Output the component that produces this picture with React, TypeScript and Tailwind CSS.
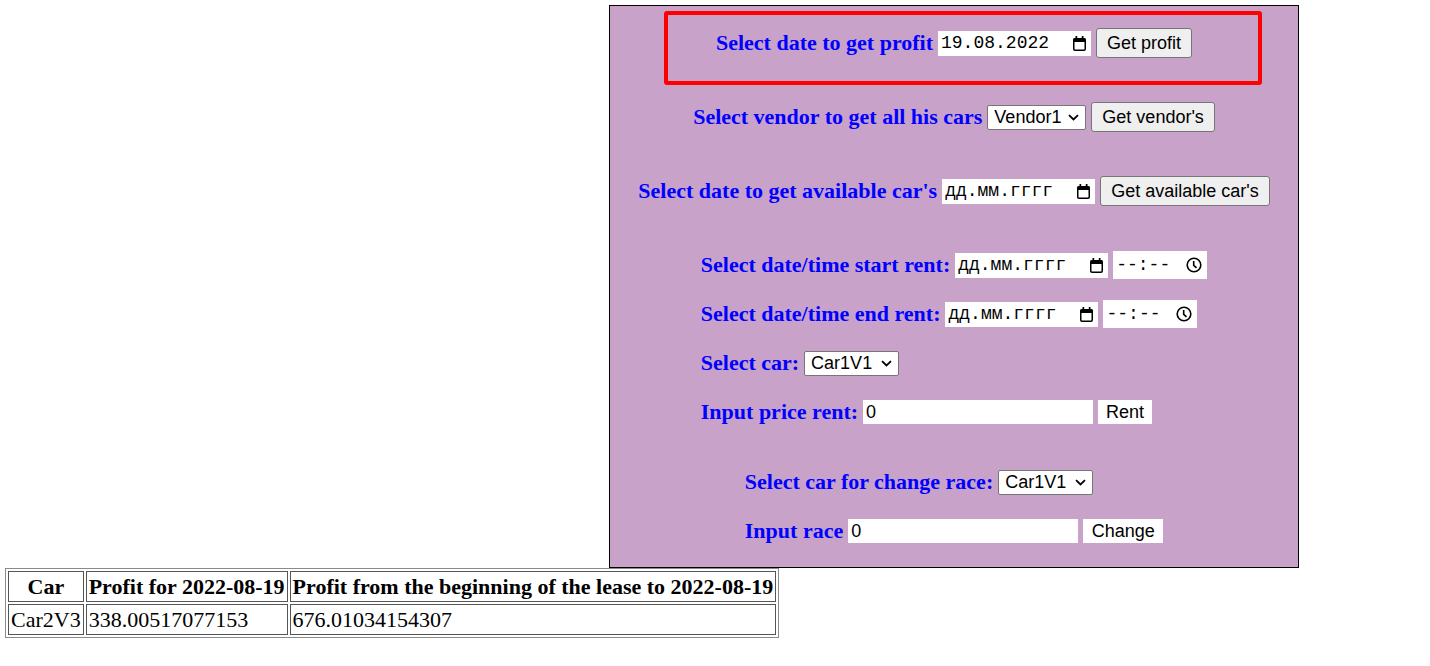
import React from 'react';

const labelCls = "text-[22px] font-bold text-[#0000ff] whitespace-nowrap leading-none";
const labelFont = { fontFamily: '"Liberation Serif", "Times New Roman", serif' };
const ctrlFont = { fontFamily: '"Liberation Sans", Arial, sans-serif' };
const monoFont = { fontFamily: '"Liberation Mono", "DejaVu Sans Mono", monospace' };

function CalendarIcon() {
  return (
    <svg width="15" height="17" viewBox="0 0 15 17">
      <rect x="1.75" y="3.75" width="11.5" height="11.5" rx="1.2" fill="none" stroke="#000" strokeWidth="1.5" />
      <rect x="1.5" y="3.5" width="12" height="3.5" fill="#000" />
      <rect x="3.5" y="1" width="1.7" height="3.5" fill="#000" />
      <rect x="9.8" y="1" width="1.7" height="3.5" fill="#000" />
    </svg>
  );
}

function ClockIcon() {
  return (
    <svg width="16" height="16" viewBox="0 0 16 16">
      <circle cx="8" cy="8" r="6.8" fill="none" stroke="#000" strokeWidth="1.6" />
      <path d="M7.7 4v4.3l2.8 2.6" fill="none" stroke="#000" strokeWidth="1.6" />
    </svg>
  );
}

function Chevron() {
  return (
    <svg width="11" height="7" viewBox="0 0 11 7">
      <path d="M1 1.2l4.5 4.3 4.5-4.3" fill="none" stroke="#000" strokeWidth="1.8" />
    </svg>
  );
}

function DateField({ value }: { value?: string }) {
  return (
    <div className="flex items-center justify-between w-[153px] h-[25px] bg-white pl-[3px] pr-[4px]">
      <span className="text-[18px] text-black leading-none" style={monoFont}>{value ?? 'дд.мм.гггг'}</span>
      <CalendarIcon />
    </div>
  );
}

function TimeField() {
  return (
    <div className="flex items-center justify-between w-[94px] h-[28px] bg-white pl-[3px] pr-[5px]">
      <span className="text-[18px] text-black leading-none" style={monoFont}>--:--</span>
      <ClockIcon />
    </div>
  );
}

function SelectField({ value, width }: { value: string; width: string }) {
  return (
    <div
      className={`flex items-center justify-between ${width} h-[25px] bg-white border border-[#767676] rounded-[2px] pl-[6px] pr-[6px]`}
    >
      <span className="text-[18px] text-black leading-none" style={ctrlFont}>{value}</span>
      <Chevron />
    </div>
  );
}

function GrayButton({ children }: { children: React.ReactNode }) {
  return (
    <button
      className="h-[30px] px-[10px] bg-[#efefef] border border-[#767676] rounded-[3px] text-[18px] text-black leading-none"
      style={ctrlFont}
    >
      {children}
    </button>
  );
}

function TextField({ value }: { value: string }) {
  return (
    <div className="flex items-center w-[230px] h-[24px] bg-white pl-[3px]">
      <span className="text-[18px] text-black leading-none" style={ctrlFont}>{value}</span>
    </div>
  );
}

function WhiteButton({ children, width }: { children: React.ReactNode; width: string }) {
  return (
    <button
      className={`${width} h-[24px] bg-white text-[18px] text-black leading-none`}
      style={ctrlFont}
    >
      {children}
    </button>
  );
}

function Row({ label, children }: { label: string; children: React.ReactNode }) {
  return (
    <div className="flex items-center h-[30px] gap-[5px]">
      <span className={labelCls} style={labelFont}>{label}</span>
      {children}
    </div>
  );
}

export default function App() {
  const cell = "border border-[#555] px-[2px] py-[2px] leading-[25px]";
  return (
    <div className="min-h-screen bg-white">
      <div className="relative ml-[609px] mt-[5px] w-[690px] h-[563px] border border-black bg-[#c8a2c8] pt-[22px] flex flex-col items-center">
        {/* red highlight frame */}
        <div className="absolute left-[54px] top-[5px] w-[598px] h-[74px] border-4 border-[#ff0000] rounded-[3px]" />

        <Row label="Select date to get profit">
          <DateField value="19.08.2022" />
          <GrayButton>Get profit</GrayButton>
        </Row>

        <div className="mt-[44px]">
          <Row label="Select vendor to get all his cars">
            <SelectField value="Vendor1" width="w-[99px]" />
            <GrayButton>Get vendor's</GrayButton>
          </Row>
        </div>

        <div className="mt-[44px]">
          <Row label="Select date to get available car's">
            <DateField />
            <GrayButton>Get available car's</GrayButton>
          </Row>
        </div>

        <div className="mt-[44px] flex flex-col items-start gap-[19px]">
          <Row label="Select date/time start rent:">
            <DateField />
            <TimeField />
          </Row>
          <Row label="Select date/time end rent:">
            <DateField />
            <TimeField />
          </Row>
          <Row label="Select car:">
            <SelectField value="Car1V1" width="w-[95px]" />
          </Row>
          <Row label="Input price rent:">
            <TextField value="0" />
            <WhiteButton width="w-[54px]">Rent</WhiteButton>
          </Row>
        </div>

        <div className="mt-[40px] flex flex-col items-start gap-[19px]">
          <Row label="Select car for change race:">
            <SelectField value="Car1V1" width="w-[95px]" />
          </Row>
          <Row label="Input race">
            <TextField value="0" />
            <WhiteButton width="w-[80px]">Change</WhiteButton>
          </Row>
        </div>
      </div>

      <table
        className="ml-[5px] border border-[#8a8a8a] border-separate border-spacing-[2px] text-[22px] text-black"
        style={labelFont}
      >
        <thead>
          <tr>
            <th className={`${cell} font-bold text-center`}>Car</th>
            <th className={`${cell} font-bold text-center`}>Profit for 2022-08-19</th>
            <th className={`${cell} font-bold text-center`}>Profit from the beginning of the lease to 2022-08-19</th>
          </tr>
        </thead>
        <tbody>
          <tr>
            <td className={cell}>Car2V3</td>
            <td className={cell}>338.00517077153</td>
            <td className={cell}>676.01034154307</td>
          </tr>
        </tbody>
      </table>
    </div>
  );
}
